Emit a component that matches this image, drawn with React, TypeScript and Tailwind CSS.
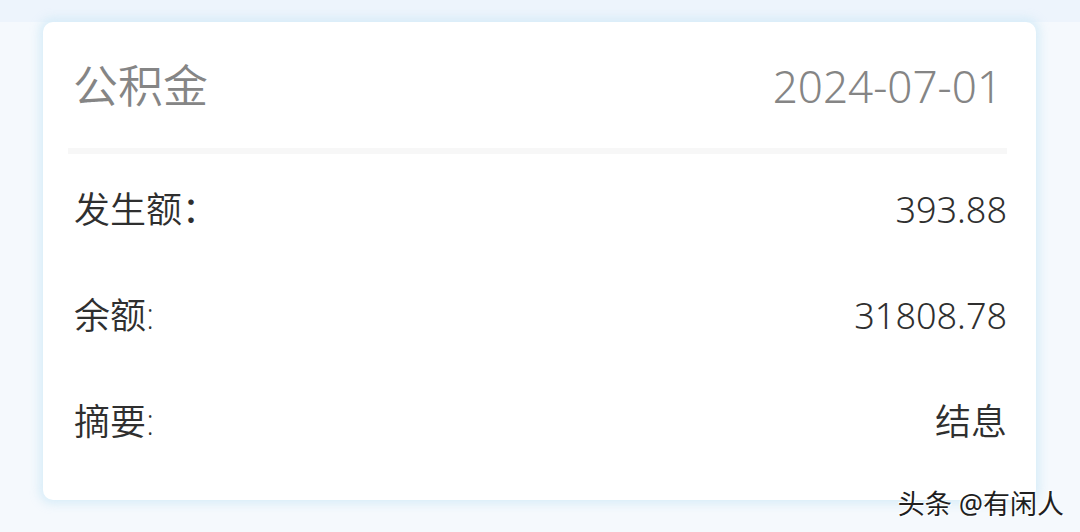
import React from "react";

const CJK = "font-['Noto_Sans','Noto_Sans_CJK_SC',sans-serif]";

const ROWS: { label: string; colon: string; value: string; num: boolean }[] = [
  { label: "发生额", colon: "：", value: "393.88", num: true },
  { label: "余额", colon: ":", value: "31808.78", num: true },
  { label: "摘要", colon: ":", value: "结息", num: false },
];

function Row({
  label,
  colon,
  value,
  num,
}: {
  label: string;
  colon: string;
  value: string;
  num: boolean;
}) {
  return (
    <div className="flex h-[106px] items-center justify-between pl-[31px] pr-[29px]">
      <span className="text-[36px] font-[350] leading-none text-[#2f2f2f]">
        {label}
        <span className={colon === ":" ? "font-extralight" : "font-normal"}>{colon}</span>
      </span>
      <span
        className={`text-[36px] leading-none text-[#2f2f2f] ${num ? "font-light" : "font-[350]"}`}
      >
        {value}
      </span>
    </div>
  );
}

export default function App() {
  return (
    <div
      className={`relative h-[532px] w-[1080px] overflow-hidden bg-[#f5f9fd] ${CJK}`}
    >
      <div className="h-[22px] bg-[#edf4fc]" />
      <div className="pl-[43px] pr-[44px]">
        <div className="flex h-[478px] flex-col rounded-[10px] bg-white shadow-[0_0_10px_4px_rgba(205,232,246,0.7)]">
          <div className="flex h-[126px] items-center justify-between pl-[30px] pr-[34px] pt-[1px]">
            <span className="text-[45px] font-[350] leading-none text-[#858585]">公积金</span>
            <span className="text-[44px] font-light leading-none text-[#858585]">
              2024-07-01
            </span>
          </div>
          <div className="ml-[25px] mr-[29px] h-[6px] bg-[#f7f7f7]" />
          <div className="pt-[3px]">
            {ROWS.map((r) => (
              <Row key={r.label} {...r} />
            ))}
          </div>
        </div>
      </div>
      <div className="absolute bottom-[15px] right-[16px] text-[27px] leading-none text-[#1f1f1f] [text-shadow:1px_1px_0_#fff,-1px_-1px_0_#fff]">
        头条 @有闲人
      </div>
    </div>
  );
}
